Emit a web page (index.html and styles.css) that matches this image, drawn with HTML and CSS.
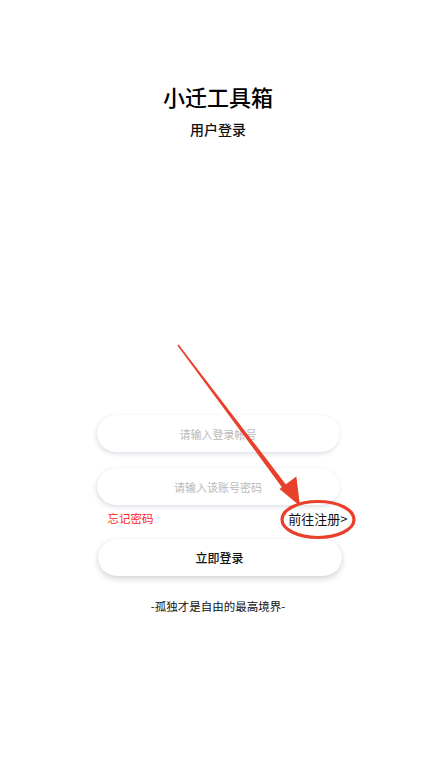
FILE: index.html
```html
<!DOCTYPE html>
<html lang="zh-CN">
<head>
<meta charset="utf-8">
<title>小迁工具箱</title>
<link rel="stylesheet" href="styles.css">
</head>
<body>
<div class="page">
  <header class="header">
    <h1 class="title">小迁工具箱</h1>
    <h2 class="subtitle">用户登录</h2>
  </header>
  <form class="form">
    <div class="field"><input class="input" type="text" placeholder="请输入登录帐号"></div>
    <div class="field"><input class="input" type="password" placeholder="请输入该账号密码"></div>
    <div class="links">
      <a class="forgot">忘记密码</a>
      <a class="register">前往注册&gt;</a>
    </div>
    <button class="submit" type="button">立即登录</button>
  </form>
  <p class="motto">-孤独才是自由的最高境界-</p>

  <svg class="annotation" width="436" height="776" viewBox="0 0 436 776">
    <polygon points="177.4,345.4 178.6,344.6 290.1,489.9 286.1,492.9" fill="#e8402a"/>
    <polygon points="279.5,489 296.3,476.4 300,506" fill="#e8402a"/>
    <ellipse cx="318" cy="519.5" rx="36" ry="18" fill="none" stroke="#e8402a" stroke-width="3.2"/>
  </svg>
</div>
</body>
</html>
```

FILE: styles.css
```css
* {
  box-sizing: border-box;
}

html, body {
  margin: 0;
  padding: 0;
  background: #ffffff;
}

body {
  font-family: "Noto Sans CJK SC", "Noto Sans", sans-serif;
  color: #111;
}

.page {
  position: relative;
  width: 436px;
  min-height: 776px;
  display: flex;
  flex-direction: column;
  align-items: center;
}

.header {
  display: flex;
  flex-direction: column;
  align-items: center;
  padding-top: 81px;
}

.title {
  margin: 0;
  font-size: 22px;
  line-height: 30px;
  font-weight: 500;
  color: #000;
}

.subtitle {
  margin: 8px 0 0;
  font-size: 14px;
  line-height: 20px;
  font-weight: 500;
  color: #111;
}

.form {
  width: 243px;
  margin-top: 276px;
  display: flex;
  flex-direction: column;
}

.field {
  height: 37px;
  border-radius: 19px;
  background: #fff;
  box-shadow: -1px 2px 4px rgba(110, 120, 150, 0.22), 0 0 1px rgba(110, 120, 150, 0.18);
  display: flex;
}

.field + .field {
  margin-top: 16px;
}

.input {
  flex: 1;
  border: none;
  outline: none;
  background: transparent;
  text-align: center;
  font-family: inherit;
  font-size: 11px;
  color: #333;
}

.input::placeholder {
  color: #b9b9b9;
}

.links {
  display: flex;
  justify-content: space-between;
  align-items: center;
  height: 26px;
  margin: 0 -8px 0 11px;
}

.forgot {
  font-size: 11.5px;
  color: #ff2424;
}

.register {
  font-size: 13px;
  color: #111;
}

.submit {
  margin-top: 8px;
  margin-left: 1px;
  width: 244px;
  height: 37px;
  border: none;
  border-radius: 19px;
  background: #fff;
  box-shadow: 0 3px 6px rgba(0, 0, 0, 0.16), 0 0 1px rgba(0, 0, 0, 0.12);
  font-family: inherit;
  font-size: 12px;
  font-weight: 500;
  color: #111;
}

.motto {
  margin: 20px 0 0;
  font-size: 11.5px;
  line-height: 20px;
  color: #111;
}

.annotation {
  position: absolute;
  left: 0;
  top: 0;
  pointer-events: none;
}
```
